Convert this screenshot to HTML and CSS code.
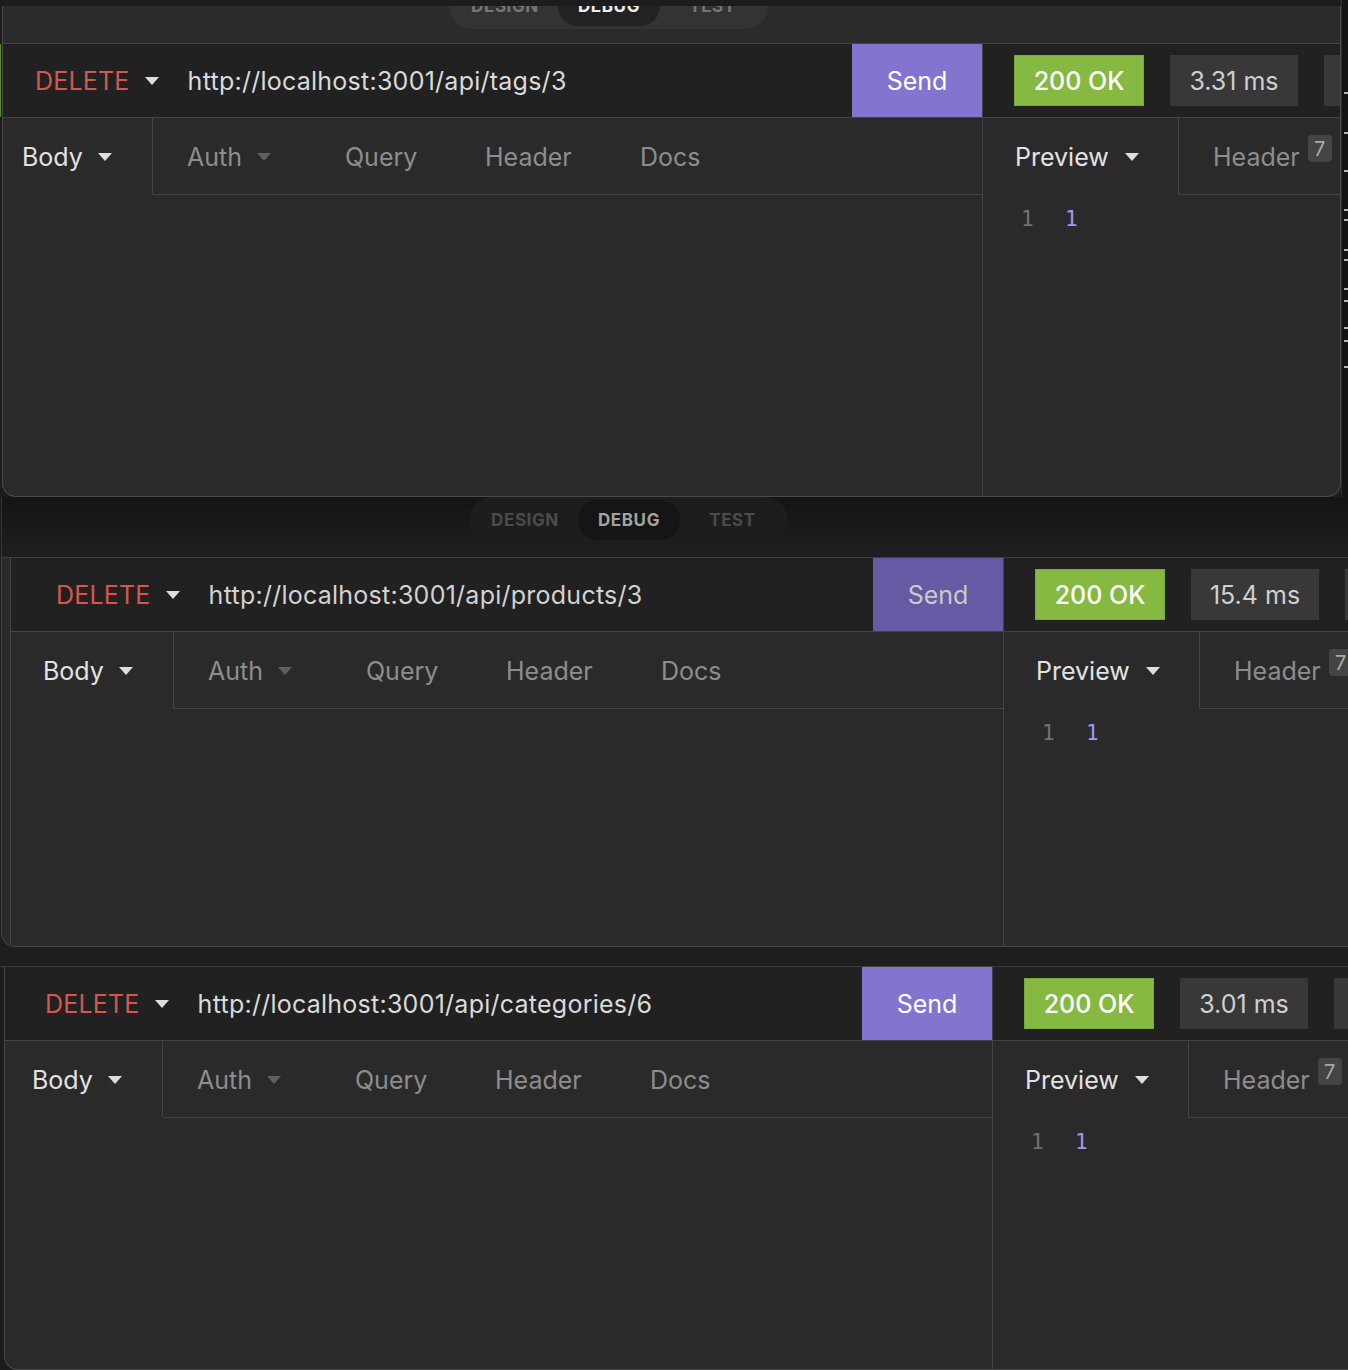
FILE: index.html
```html
<!DOCTYPE html>
<html lang="en">
<head>
<meta charset="utf-8">
<title>Insomnia DELETE requests</title>
<link rel="stylesheet" href="styles.css">
</head>
<body>
<div class="page">

  <!-- Screenshot 1 -->
  <section class="shot shot1">
    <div class="edge-left"><span class="edge-green"></span></div>
    <div class="win win1">
      <div class="win-head">
        <div class="pill pill-light">
          <span class="pill-item w1">DESIGN</span>
          <span class="pill-item w2 active">DEBUG</span>
          <span class="pill-item w3">TEST</span>
        </div>
      </div>
      <div class="panes">
        <div class="pane-req">
          <div class="urlbar">
            <span class="method">DELETE</span><span class="caret caret-light"></span>
            <span class="url">http://localhost:3001/api/tags/3</span>
            <span class="send">Send</span>
          </div>
          <div class="tabs">
            <div class="tab tab-body active"><span>Body</span><span class="caret caret-light"></span></div>
            <div class="tab tab-auth"><span>Auth</span><span class="caret caret-dim"></span></div>
            <div class="tab tab-query">Query</div>
            <div class="tab tab-header">Header</div>
            <div class="tab tab-docs">Docs</div>
            <div class="tab tab-fill"></div>
          </div>
          <div class="pane-content"></div>
        </div>
        <div class="pane-res">
          <div class="statusbar">
            <span class="status-ok">200 OK</span>
            <span class="status-box">3.31 ms</span>
            <span class="status-box"></span>
          </div>
          <div class="tabs">
            <div class="tab tab-preview active"><span>Preview</span><span class="caret caret-light"></span></div>
            <div class="tab tab-rheader"><span>Header</span><span class="badge">7</span></div>
            <div class="tab tab-fill"></div>
          </div>
          <div class="preview"><span class="ln">1</span><span class="val">1</span></div>
        </div>
      </div>
    </div>
    <div class="edge-right">
      <span class="tick t1"></span><span class="tick t2"></span><span class="tick t3"></span>
      <span class="tick t4"></span><span class="tick t5"></span><span class="tick t6"></span>
      <span class="tick t7"></span><span class="tick t8"></span><span class="tick t9"></span>
      <span class="tick t10"></span><span class="tick t11"></span><span class="tick t12"></span>
    </div>
  </section>

  <!-- Screenshot 2 -->
  <section class="shot shot2">
    <div class="shot2-top">
      <div class="pill pill-dark">
        <span class="pill-item w1">DESIGN</span>
        <span class="pill-item w2 active">DEBUG</span>
        <span class="pill-item w3">TEST</span>
      </div>
    </div>
    <div class="shot2-body">
      <div class="gutter"></div>
      <div class="win win2">
        <div class="panes">
          <div class="pane-req">
            <div class="urlbar">
              <span class="method">DELETE</span><span class="caret caret-light"></span>
              <span class="url">http://localhost:3001/api/products/3</span>
              <span class="send send-dim">Send</span>
            </div>
            <div class="tabs">
              <div class="tab tab-body active"><span>Body</span><span class="caret caret-light"></span></div>
              <div class="tab tab-auth"><span>Auth</span><span class="caret caret-dim"></span></div>
              <div class="tab tab-query">Query</div>
              <div class="tab tab-header">Header</div>
              <div class="tab tab-docs">Docs</div>
              <div class="tab tab-fill"></div>
            </div>
            <div class="pane-content"></div>
          </div>
          <div class="pane-res">
            <div class="statusbar">
              <span class="status-ok">200 OK</span>
              <span class="status-box">15.4 ms</span>
              <span class="status-box"></span>
            </div>
            <div class="tabs">
              <div class="tab tab-preview active"><span>Preview</span><span class="caret caret-light"></span></div>
              <div class="tab tab-rheader"><span>Header</span><span class="badge">7</span></div>
              <div class="tab tab-fill"></div>
            </div>
            <div class="preview"><span class="ln">1</span><span class="val">1</span></div>
          </div>
        </div>
      </div>
    </div>
  </section>

  <!-- Screenshot 3 -->
  <section class="shot shot3">
    <div class="shot3-top"></div>
    <div class="win win3">
      <div class="panes">
        <div class="pane-req">
          <div class="urlbar">
            <span class="method">DELETE</span><span class="caret caret-light"></span>
            <span class="url">http://localhost:3001/api/categories/6</span>
            <span class="send">Send</span>
          </div>
          <div class="tabs">
            <div class="tab tab-body active"><span>Body</span><span class="caret caret-light"></span></div>
            <div class="tab tab-auth"><span>Auth</span><span class="caret caret-dim"></span></div>
            <div class="tab tab-query">Query</div>
            <div class="tab tab-header">Header</div>
            <div class="tab tab-docs">Docs</div>
            <div class="tab tab-fill"></div>
          </div>
          <div class="pane-content"></div>
        </div>
        <div class="pane-res">
          <div class="statusbar">
            <span class="status-ok">200 OK</span>
            <span class="status-box">3.01 ms</span>
            <span class="status-box"></span>
          </div>
          <div class="tabs">
            <div class="tab tab-preview active"><span>Preview</span><span class="caret caret-light"></span></div>
            <div class="tab tab-rheader"><span>Header</span><span class="badge">7</span></div>
            <div class="tab tab-fill"></div>
          </div>
          <div class="preview"><span class="ln">1</span><span class="val">1</span></div>
        </div>
      </div>
    </div>
  </section>

</div>
</body>
</html>
```

FILE: styles.css
```css
* { box-sizing: border-box; margin: 0; padding: 0; }

html, body { background: #1c1c1c; }

body {
  width: 1348px;
  height: 1370px;
  overflow: hidden;
  font-family: Inter, "Noto Sans", sans-serif;
  font-size: 25px;
  color: #dcdcdc;
}

.page { display: flex; flex-direction: column; }

.shot { flex: none; overflow: hidden; }

/* ---------- shared window parts ---------- */
.win { background: #2a2a2a; display: flex; flex-direction: column; overflow: hidden; }

.panes { flex: 1; display: flex; min-height: 0; }

.pane-req {
  flex: none;
  display: flex;
  flex-direction: column;
  border-right: 1px solid #434343;
}

.pane-res {
  flex: 1;
  min-width: 0;
  display: flex;
  flex-direction: column;
  overflow: hidden;
}

.urlbar, .statusbar {
  flex: none;
  height: 74px;
  background: #212121;
  border-bottom: 1px solid #434343;
  display: flex;
  align-items: center;
}

.method { color: #d5564e; letter-spacing: 0.2px; }

.caret {
  display: inline-block;
  width: 0;
  height: 0;
  border-left: 7px solid transparent;
  border-right: 7px solid transparent;
  border-top: 8px solid #dcdcdc;
  margin-left: 15px;
}
.caret-light { border-top-color: #dedede; }
.caret-dim { border-top-color: #5f5f5f; }

.url { margin-left: 29px; color: #dadada; white-space: nowrap; letter-spacing: 0.25px; }

.send {
  margin-left: auto;
  width: 130px;
  height: 100%;
  background: #8375cf;
  color: #ffffff;
  display: flex;
  align-items: center;
  justify-content: center;
}
.send-dim { background: #665aa4; color: #cacaca; }

.statusbar { padding-left: 31px; white-space: nowrap; }

.status-ok {
  flex: none;
  width: 130px;
  height: 51px;
  background: #85b941;
  border: 1px solid #79aa3a;
  color: #fff;
  font-weight: 500;
  display: flex;
  align-items: center;
  justify-content: center;
}

.status-box {
  flex: none;
  width: 128px;
  height: 51px;
  margin-left: 26px;
  background: #383838;
  color: #cfcfcf;
  display: flex;
  align-items: center;
  justify-content: center;
}

.tabs {
  flex: none;
  height: 77px;
  display: flex;
}

.tab {
  height: 100%;
  padding-top: 2px;
  display: flex;
  align-items: center;
  color: #8d8d8d;
  border-bottom: 1px solid #434343;
  white-space: nowrap;
  flex: none;
}
.tab.active { color: #e2e2e2; border-bottom-color: transparent; border-right: 1px solid #434343; }
.tab-fill { flex: 1; }

.tab-auth { width: 160px; padding-left: 34px; }
.tab-query { width: 140px; padding-left: 32px; }
.tab-header { width: 153px; padding-left: 32px; }
.tab-docs { width: 128px; padding-left: 34px; }

.tab-preview { width: 196px; padding-left: 32px; }
.tab-preview .caret { margin-left: 16px; }
.tab-rheader { padding-left: 34px; padding-right: 8px; align-items: center; }

.badge {
  align-self: flex-start;
  margin-top: 15px;
  margin-left: 8px;
  width: 24px;
  height: 27px;
  border-radius: 4px;
  background: #444444;
  color: #a9a9a9;
  font-size: 20px;
  display: flex;
  align-items: center;
  justify-content: center;
}

.pane-content { flex: 1; }

.preview {
  flex: 1;
  padding: 11px 0 0 38px;
  font-family: "DejaVu Sans Mono", "Liberation Mono", monospace;
  font-size: 21px;
  line-height: 26px;
  display: flex;
  align-items: flex-start;
}
.preview .ln { width: 44px; color: #727272; }
.preview .val { color: #a497f2; }

/* ---------- pill ---------- */
.pill {
  display: flex;
  flex: none;
  width: 319px;
  padding: 3px;
  height: 46px;
  border-radius: 23px;
  font-size: 17px;
  font-weight: 700;
  letter-spacing: 0.6px;
}
.pill-item {
  height: 40px;
  border-radius: 20px;
  display: flex;
  align-items: center;
  justify-content: center;
}
.pill-item.w1 { width: 106px; }
.pill-item.w2 { width: 102px; }
.pill-item.w3 { width: 105px; }

.pill-light { background: #333333; color: #767676; }
.pill-light .active { background: #222222; color: #f0f0f0; }

.pill-dark { background: #1d1d1d; color: #4b4b4b; }
.pill-dark .active { background: #151515; color: #a2a2a2; }

/* ---------- screenshot 1 ---------- */
.shot1 { height: 497px; display: flex; }

.edge-left { width: 2px; padding-top: 44px; }
.edge-green { display: block; width: 1px; height: 73px; background: #5e8c36; }

.win1 {
  margin-top: 6px;
  width: 1339px;
  height: 491px;
  border: 1px solid #4a4a4a;
  border-top: none;
  border-radius: 0 0 14px 14px;
}

.win-head {
  flex: none;
  height: 38px;
  background: #2b2b2b;
  border-bottom: 1px solid #454545;
  overflow: hidden;
  padding-left: 446px;
  display: flex;
  align-items: flex-start;
}
.win-head .pill { margin-top: -23px; }

.win1 .pane-req { width: 980px; }
.win1 .urlbar .method { margin-left: 32px; }
.win1 .tab-body { width: 150px; padding-left: 19px; }

.edge-right {
  width: 7px;
  background: #141414;
  border-left: 1px solid #2e2e2e;
  display: flex;
  flex-direction: column;
}
.tick { display: block; height: 2px; margin-left: 2px; background: #b5b5b5; flex: none; }
.t1 { margin-top: 92px; }
.t2 { margin-top: 38px; }
.t3 { margin-top: 36px; }
.t4 { margin-top: 37px; }
.t5 { margin-top: 8px; }
.t6 { margin-top: 28px; }
.t7 { margin-top: 8px; }
.t8 { margin-top: 27px; }
.t9 { margin-top: 10px; }
.t10 { margin-top: 25px; }
.t11 { margin-top: 11px; }
.t12 { margin-top: 24px; }

/* ---------- screenshot 2 ---------- */
.shot2 { height: 450px; display: flex; flex-direction: column; }

.shot2-top {
  flex: none;
  height: 61px;
  margin-left: 1px;
  background: linear-gradient(#141414, #1f1f1f);
  border-left: 1px solid #333333;
  border-bottom: 1px solid #3e3e3e;
  padding-left: 467px;
  display: flex;
  align-items: flex-start;
}

.shot2-body {
  flex: 1;
  display: flex;
  margin-left: 1px;
  border-left: 1px solid #474747;
  border-bottom: 1px solid #474747;
  border-bottom-left-radius: 14px;
  background: #2a2a2a;
  overflow: hidden;
}
.gutter { width: 8px; flex: none; background: #2a2a2a; }
.win2 { flex: 1; border-left: 1px solid #454545; }
.win2 .pane-req { width: 993px; }
.win2 .urlbar .method { margin-left: 45px; }
.win2 .tab-body { width: 163px; padding-left: 32px; }
.win2 .url { color: #d2d2d2; }

/* ---------- screenshot 3 ---------- */
.shot3 { height: 423px; display: flex; flex-direction: column; }

.shot3-top {
  flex: none;
  height: 20px;
  background: #1e1e1e;
  border-bottom: 1px solid #3c3c3c;
}

.win3 {
  flex: 1;
  margin-left: 4px;
  border-left: 1px solid #474747;
  border-bottom: 1px solid #474747;
  border-bottom-left-radius: 14px;
}
.win3 .pane-req { width: 988px; }
.win3 .urlbar .method { margin-left: 40px; }
.win3 .tab-body { width: 158px; padding-left: 27px; }
```
